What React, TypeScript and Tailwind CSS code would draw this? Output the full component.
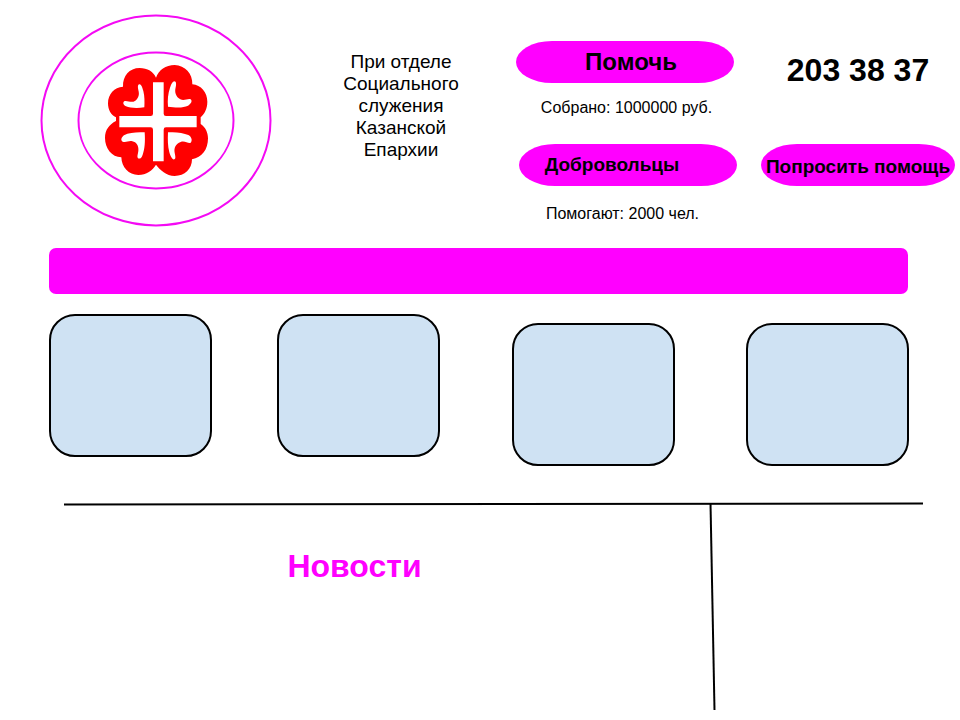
import React from "react";

function Logo() {
  return (
    <svg
      viewBox="40 14 232 214"
      className="h-[214px] w-[232px] shrink-0"
      role="img"
      aria-label="Логотип"
    >
      <g fill="none" stroke="#f40af4" strokeWidth="2">
        <ellipse cx="156" cy="120.4" rx="114.5" ry="105" />
        <ellipse cx="156" cy="120.4" rx="77.5" ry="68" />
      </g>
      <g transform="translate(95 55) scale(0.33333)">
        <path
          fill="#ff0000"
          d="M183 68 C191 45 212 30 239 30 C270 31 293 56 292 88 C318 90 337 112 337 140 C337 162 328 177 317 187 L317 207 C331 217 339 231 339 250 C339 284 321 308 291 313 C291 342 269 363 239 363 C214 362 195 345 183 329 C173 346 154 360 130 360 C101 359 80 338 79 307 C50 306 30 280 30 249 C30 224 43 208 63 198 L63 187 C47 180 39 164 39 145 C39 117 58 97 84 95 C83 63 103 39 134 39 C157 39 176 50 183 68 Z"
        />
        <g fill="#ffffff">
          <path d="M174 82 H206 V176 Q206 183 213 183 H305 V217 H213 Q206 217 206 224 V319 H174 V224 Q174 217 167 217 H73 V183 H167 Q174 183 174 176 Z" />
          <path d="M132 88 C138 86 142 96 145 108 C149 124 149 140 148 157 C127 160 105 159 93 154 C84 150 82 140 90 138 C100 137 110 145 121 137 C131 129 134 119 130 105 C128 97 128 90 132 88 Z" />
          <path d="M238 79 C244 79 244 88 242 97 C238 113 243 126 256 133 C267 139 278 130 287 133 C293 138 288 147 279 152 C263 160 238 157 219 155 C217 135 219 115 225 98 C229 87 233 79 238 79 Z" />
          <path d="M149 232 C151 260 149 283 143 299 C140 308 135 313 129 310 C125 305 129 297 130 288 C132 273 124 261 112 259 C101 256 93 264 83 260 C76 256 79 247 87 241 C102 232 127 231 149 232 Z" />
          <path d="M219 232 C240 230 265 233 280 240 C291 246 293 258 286 264 C278 266 269 256 257 261 C242 266 236 279 239 293 C241 303 243 311 238 313 C232 315 226 303 223 292 C218 273 218 253 219 232 Z" />
        </g>
      </g>
    </svg>
  );
}

const pill =
  "flex h-[42px] items-center justify-center rounded-[36px/21px] bg-[#ff00ff] font-bold whitespace-nowrap";

function Header() {
  return (
    <header className="flex h-[248px] pr-[5px] pl-10">
      <div className="pt-3.5">
        <Logo />
      </div>
      <p className="ml-3.5 flex-1 pt-[51px] text-center text-[19px] leading-[22px]">
        При отделе
        <br />
        Социального
        <br />
        служения
        <br />
        Казанской
        <br />
        Епархии
      </p>
      <div className="flex w-[221px] flex-col pt-[41px] text-center">
        <button type="button" className={`${pill} w-[218px] pl-3 text-2xl`}>
          Помочь
        </button>
        <p className="mt-[13px] leading-6">Собрано: 1000000 руб.</p>
        <button
          type="button"
          className={`${pill} mt-6 w-[218px] self-end pr-8 text-[19px]`}
        >
          Добровольцы
        </button>
        <p className="mt-4 pr-2 leading-6">Помогают: 2000 чел.</p>
      </div>
      <div className="ml-6 w-[194px] pt-[50px] text-center">
        <p className="text-[32px] leading-10 font-bold">203 38 37</p>
        <button
          type="button"
          className={`${pill} mt-[54px] w-full pt-1 text-[19px]`}
        >
          Попросить помощь
        </button>
      </div>
    </header>
  );
}

const card =
  "h-[143px] w-[163px] rounded-[26px] border-2 border-black bg-[#cfe2f3]";

export default function App() {
  return (
    <div className="min-h-screen bg-white font-['Liberation_Sans',Arial,sans-serif] text-base text-black">
      <Header />
      <nav
        aria-label="Меню"
        className="mr-[52px] ml-[49px] h-[46px] rounded-[7px] bg-[#ff00ff]"
      />
      <main>
        <section className="mt-5 mr-[51px] ml-[49px] grid grid-cols-[228fr_235fr_234fr_163fr]">
          <div className={card} />
          <div className={card} />
          <div className={`${card} mt-[9px]`} />
          <div className={`${card} mt-[9px]`} />
        </section>
        <section className="mt-9 mr-[37px] ml-16">
          <svg
            viewBox="0 0 858 4"
            preserveAspectRatio="none"
            className="block h-1 w-full"
            aria-hidden="true"
          >
            <path d="M0 2.5 L858 1.5" stroke="#000" strokeWidth="2" />
          </svg>
          <div className="flex">
            <h2 className="flex-1 pt-10 pr-16 text-center text-[32px] leading-10 font-bold text-[#ff00ff]">
              Новости
            </h2>
            <svg
              viewBox="0 0 8 206"
              className="h-[206px] w-2 shrink-0 overflow-visible"
              aria-hidden="true"
            >
              <path d="M1.5 -3 L5.5 204" stroke="#000" strokeWidth="2" />
            </svg>
            <aside className="w-[206px]" />
          </div>
        </section>
      </main>
    </div>
  );
}
